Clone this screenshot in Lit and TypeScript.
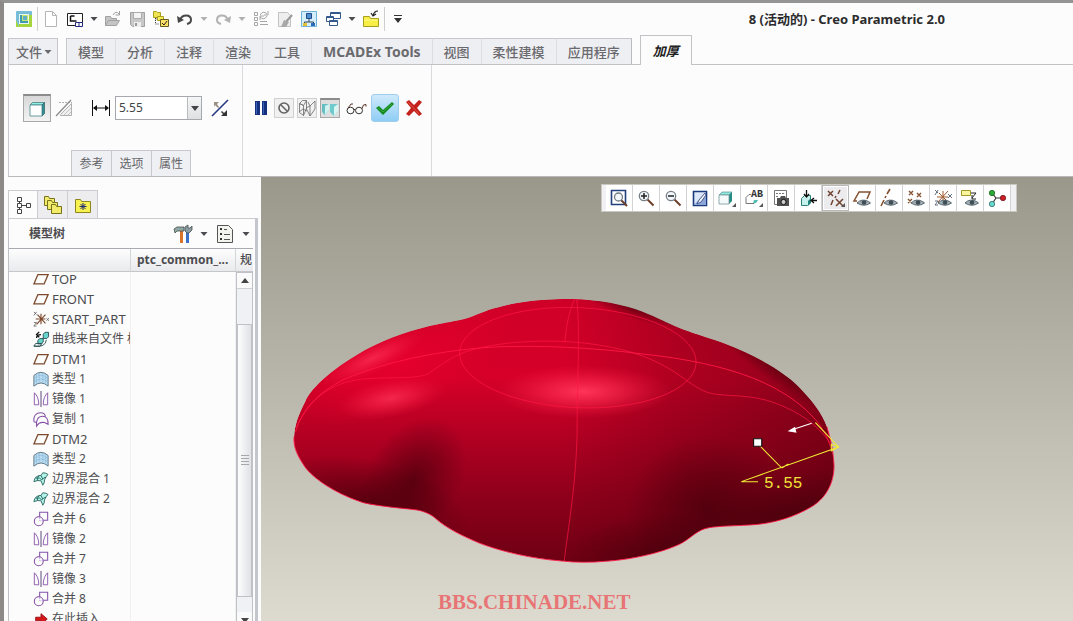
import { LitElement, html, svg, css, nothing, TemplateResult } from "lit";
import { customElement, property } from "lit/decorators.js";

const eye = svg`<path d="M4 14 Q9 9 15.500 12.500 L17.500 14 Q11 18.500 4 14Z" fill="#a3afb5" stroke="#58666e"/><circle cx="11" cy="13.500" r="2.300" fill="#3f4d55"/>`;
const corner = svg`<path d="M18 14v4h-4z" fill="#555"/>`;
const lens = svg`<path d="M10.500 10.500l6 6" stroke="#6b3f2a" stroke-width="2"/><circle cx="7" cy="7" r="4.700" fill="#f1f6fa" stroke="#777f86" stroke-width="1.300"/>`;
const folder = (x: number, y: number) => svg`<path d="M${x} ${y}h4l1 2h5v7h-10z" fill="#f3ec6a" stroke="#77721c"/>`;

const icons: Record<string, TemplateResult> = {
  app: svg`<rect x="1" y="1" width="16" height="16" rx="1" fill="#78bdd8"/><path d="M1 17V10L4 17zM4 14h13v3H4zM14 5h3v12h-3z" fill="#a5d63c"/><path d="M4 4h10v10H4z" fill="#e9f5f8"/><path d="M5 5h8v8H5z" fill="#3e9cae"/><path d="M7 5h6v6H7z" fill="#c8e86d"/><path d="M8 6h4v4H8z" fill="#5fb0c8"/>`,
  blank: svg`<path d="M3.500 1.500h7l4 4v11h-11zM10.500 1.500v4h4" fill="#fff" stroke="#b5b5b5"/>`,
  window: svg`<path d="M1.500 3.500h15v12h-15z" fill="#fff" stroke="#222"/><path d="M4.500 6v5h6M4.500 6h4" fill="none" stroke="#111" stroke-width="1.500"/><path d="M9.500 12.500h7v4h-7zM13 12v4" fill="#fff" stroke="#222b82"/>`,
  open: svg`<path d="M1.500 15.500v-9h5l1 2h5v2M1.500 15.500l3-5h11l-3 5z" fill="#c5c5c5" stroke="#a1a1a1"/><path d="M9 5q3-5 6-1M15.500 1v4h-4" fill="none" stroke="#a1a1a1"/>`,
  save: svg`<path d="M2.500 2.500h14v14h-12l-2-2z" fill="#c8c8c8" stroke="#a1a1a1"/><path d="M5.500 2.500h8v6h-8z" fill="#f4f4f4" stroke="#ababab"/><path d="M6 12h7v5H6z" fill="#eee"/><path d="M7 13h2v3H7z" fill="#999"/>`,
  modeltree: svg`<path d="M1.500 1.500h3l1 1h3v5h-7z" fill="#efe353" stroke="#aaa020"/><path d="M3.500 8v6h4M3.500 9h4" fill="none" stroke="#333" stroke-dasharray="1 1"/><path d="M5.500 6.500h6v4h-6z" fill="#f5ec56" stroke="#aaa020"/><path d="M8.500 9.500h8v7h-8z" fill="#fde166" stroke="#665d22"/><path d="M10 13l2 2 3-4" fill="none" stroke="#222"/>`,
  undo: svg`<path d="M4 10C6 4 15 4 15 10q0 3-4 4" fill="none" stroke="#484848" stroke-width="2"/><path d="M1 6l1 7 6-3z" fill="#484848"/>`,
  redo: svg`<path d="M14 10C12 4 3 4 3 10q0 3 4 4" fill="none" stroke="#b2b2b2" stroke-width="2"/><path d="M17 6l-1 7-6-3z" fill="#b2b2b2"/>`,
  regen: svg`<path d="M2.500 2.500h3v3h-3zM2.500 7.500h3v3h-3zM2.500 12.500h3v3h-3zM8 11.500h7M8 14.500h8" fill="none" stroke="#a6a6a6"/><path d="M8 5q3-5 7-1M16 1v4h-4M15 6q-3 5-7 1M8 10V6h4" fill="none" stroke="#a6a6a6"/>`,
  erase: svg`<path d="M2.500 2.500h9l3 3v11h-12z" fill="#eee" stroke="#c2c2c2"/><path d="M16 5l-7 8" stroke="#999" stroke-width="2"/><path d="M8 10l5 2-3 5H5z" fill="#a8a8a8"/>`,
  scene: svg`<path d="M1.500 1.500h15v15h-15z" fill="#d4effb" stroke="#6fb3da"/><path d="M6.500 3.500h5v5h-5z" fill="#4d8fc8" stroke="#234a8a"/><path d="M9 9v3M4.500 14v-2h9v2" fill="none" stroke="#345"/><path d="M3 13h4v3H3z" fill="#e4be34"/><path d="M11 13h4v3h-4z" fill="#2b6dbb"/>`,
  windows: svg`<path d="M6.500 2.500h10v6h-10z" fill="#fff" stroke="#34598c"/><path d="M7 3.500h9" stroke="#34598c"/><path d="M2.500 6.500h7v5h-7z" fill="#fff" stroke="#34598c"/><path d="M3 7.500h6" stroke="#34598c"/><path d="M5.500 10.500h8v5h-8z" fill="#fff" stroke="#34598c"/><path d="M6 11.500h7" stroke="#34598c"/>`,
  close: svg`<path d="M1.500 6.500h6l1 2h8v8h-15z" fill="#f7ef45" stroke="#a89e1e"/><path d="M2 10h14" stroke="#fff98e"/><path d="M16 1q-4 0-5 5M9 3l2 3 3-2" fill="none" stroke="#222" stroke-width="1.200"/>`,
  solid: svg`<path d="M2 5l2.500-2.500h12L14 5z" fill="#8df0e4" stroke="#3d6f77" stroke-width=".7"/><path d="M16.500 2.500v11L14 16V5z" fill="#2e8f94" stroke="#2d5f66" stroke-width=".7"/><path d="M2 5h12v11H2z" fill="#fdfefe" stroke="#46888c" stroke-width=".8"/>`,
  hatch: svg`<path d="M3 3.500h13" stroke="#b0b0b0" stroke-dasharray="2 1"/><path d="M4.500 15.500L15.500 4.500v12h-11z" fill="#f0f0f0" stroke="#b0b0b0"/><path d="M8 16l7-7M12 16l3-3" stroke="#c4c4c4"/><path d="M0 17L15 1" stroke="#8b8b8b" stroke-width="1.200"/>`,
  dim: svg`<path d="M.5 1v16M17.500 1v16" stroke="#111"/><path d="M2 9h14" stroke="#111"/><path d="M1 9l4-3v6zM17 9l-4-3v6z" fill="#111"/>`,
  flip: svg`<path d="M1 17L17 1" stroke="#24367f" stroke-width="1.600"/><path d="M3 3h5L6 5l2 3-1 1-3-3-1 2z" fill="#9a8f85"/><path d="M16 11v6h-6l2-2-2-2 1-1 2 2z" fill="#333"/>`,
  pause: svg`<path d="M3 2h5v14H3zM10 2h5v14h-5z" fill="#16317e"/><path d="M4 3h1v12H4zM11 3h1v12h-1z" fill="#3c62ba"/>`,
  none: svg`<circle cx="9" cy="9" r="5" fill="none" stroke="#636363" stroke-width="1.600"/><path d="M5.500 5.500l7 7" stroke="#636363" stroke-width="1.600"/>`,
  wire: svg`<path d="M1.500 4.500l3-3h4l-3 5zM1.500 4.500v9l4 3v-10zM8.500 1.500v8l-3 7M8 9l4 8V7zM12 7l5-5v8l-5 7M10 3l2 4M1 13l4-3 4 2" fill="none" stroke="#6a6a6a" stroke-width=".8"/>`,
  shaded: svg`<path d="M1 4h7v6l-4 5-3-3z" fill="#65bfc2"/><path d="M4 6l4-2v6l-4 5z" fill="#cef3f0"/><path d="M9 4h8v7l-4 5-4-4z" fill="#6fcacb"/><path d="M13 7l4-3v7l-4 5z" fill="#d9f6f3"/>`,
  glasses: svg`<ellipse cx="3.500" cy="11.500" rx="3.500" ry="3.300" fill="none" stroke="#333"/><ellipse cx="12" cy="11.500" rx="3.500" ry="3.300" fill="none" stroke="#333"/><path d="M7 10.500h1.500M1 9l3-4h2M15 9.500q1-5 4-4v2" fill="none" stroke="#5d3326"/>`,
  check: svg`<path d="M0 9l3-2 4 4 9-8 2 2L7 16z" fill="#128a1e"/><path d="M2 9l5 4 9-8" stroke="#37aa3f" fill="none"/>`,
  cross: svg`<path d="M1 3l3-2 5 5 5-5 3 2-5 6 5 6-3 2-5-5-5 5-3-2 5-6z" fill="#c3221c"/><path d="M3 3l11 12" stroke="#dd5547"/>`,
  tree: svg`<path d="M3.500 1.500h4v4h-4zM3.500 7.500h4v4h-4zM3.500 13.500h4v4h-4zM12.500 7.500h4v4h-4zM5.500 5.500v2M5.500 11.500v2M7.500 9.500h5" fill="none" stroke="#444"/>`,
  folders: svg`${folder(0.5, 0.5)}${folder(3.5, 4.5)}${folder(7.5, 8.5)}`,
  favorite: svg`<path d="M1.500 3.500h5l1 2h9v11h-15z" fill="#f8f250" stroke="#8d8620"/><path d="M9 7v7M5.500 10.500h7M6.500 8l5 5M11.500 8l-5 5" stroke="#222a70"/>`,
  tools: svg`<path d="M6 6h3v12H6z" fill="#d9742c"/><path d="M0 4l3-2h7v4H3L1 8z" fill="#90a7a4" stroke="#44504e" stroke-width=".8"/><path d="M12 7h3v11h-3z" fill="#3b70c8"/><path d="M11 2v4l2 2h2l3-3V1l-2 2h-2V0z" fill="#8c9da2" stroke="#44504e" stroke-width=".8"/>`,
  list: svg`<path d="M1.500 .5h11l4 4v13h-15z" fill="#f4f4ee" stroke="#555"/><path d="M4 3h2v2H4zM4 8h2v2H4zM4 13h2v2H4z" fill="#333"/><path d="M8 4.500h3M8 9.500h6M8 14.500h6" stroke="#555"/>`,
  plane: svg`<path d="M1 14.500L5.500 4h11.500l-4.500 10.500z" fill="none" stroke="#7d4a2e" stroke-width="1.500"/>`,
  csys: svg`<path d="M3 9h11M9 3v12M5 4l9 10M14 4L4 15" stroke="#7d4a2e" stroke-width="1.300"/><path d="M1 1l3 3M4 1L1 5M15 8l3 3M18 8l-3 3M1 13h3l-3 4h3" fill="none" stroke="#6a6a6a"/>`,
  curvefile: svg`<path d="M4 8q0-4 5-4M7 1L4 4l3 3" fill="none" stroke="#111" stroke-width="1.500"/><path d="M11.500 3.500l2-2h4v5l-2 2h-4zM5.500 10.500l2-2h4v4l-2 2h-4z" fill="#67d5ca" stroke="#244c50"/><path d="M1 17l2-3h7l-2 3zq13 2 14-7" fill="none" stroke="#244c50"/>`,
  style: svg`<path d="M1 5q8-7 16 0v12q-8-7-16 0z" fill="#b8dcf2" stroke="#566e7a"/><path d="M4 5v9M7 3v9M11 3v9M14 4v10M2 8q7-6 14 0M2 12q7-6 14 0" fill="none" stroke="#7ba9cc" stroke-dasharray="1 1"/>`,
  mirror: svg`<path d="M9 0v18" stroke="#493268"/><path d="M1.500 2v13.500h5q0-9-5-13.500M16.500 2v13.500h-5q0-9 5-13.500" fill="none" stroke="#8551a8"/>`,
  copy: svg`<path d="M1 12q-1-10 8-10 4 0 5 4M1 12l3 1M4 17q-1-11 7-11 6 0 6 9l-4-2q-6-1-9 4z" fill="none" stroke="#8551a8" stroke-width="1.200"/>`,
  blend: svg`<path d="M1 12q1-7 8-7l2-3q4 0 6 2-3 2-4 6 0 4-2 6l-2-5q-4-1-8 1z" fill="#b4f3ea" stroke="#24645d"/><path d="M3 8q5-1 7 2 2-3 5-3M7 5q-3 3-2 6M9 5l2 4" fill="none" stroke="#24645d"/>`,
  merge: svg`<path d="M7.500 7V1.500h9v9h-5" fill="none" stroke="#8551a8" stroke-width="1.200"/><circle cx="6.500" cy="11.500" r="5" fill="none" stroke="#8551a8" stroke-width="1.200"/><path d="M7.500 8v3h4" fill="none" stroke="#b394c9" stroke-dasharray="1 1"/>`,
  insert: svg`<path d="M3 7h6V3l7 6-7 6v-4H3z" fill="#d5171b" stroke="#95090d"/>`,
  refit: svg`<path d="M1.500 1.500h14v14h-14z" fill="#fff" stroke="#233f7c" stroke-width="1.600"/><path d="M11 11l6 6" stroke="#6b3f2a" stroke-width="2"/><circle cx="8.500" cy="8" r="4" fill="#f4f8fa" stroke="#737d83" stroke-width="1.300"/>`,
  zoomin: svg`${lens}<path d="M4 7h6M7 4v6" stroke="#222" stroke-width="1.500"/>`,
  zoomout: svg`${lens}<path d="M4 7h6" stroke="#222" stroke-width="1.500"/>`,
  repaint: svg`<path d="M2.500 2.500h13v14h-13z" fill="#dce8f8" stroke="#1c3a7e" stroke-width="1.600"/><path d="M3 16L15 3v13z" fill="#8ba5d8"/><path d="M14 4l-6 7-2 4 4-2 5-7z" fill="#f4f6ff" stroke="#293e77" stroke-width=".8"/>`,
  display: svg`<path d="M1 6l3-3h10l-3 3z" fill="#8fe6dc" stroke="#5f9496" stroke-width=".7"/><path d="M14 3v9l-3 3V6z" fill="#258a83"/><path d="M1 6h10v9H1z" fill="#f4faf9" stroke="#73989b" stroke-width=".8"/>${corner}`,
  views: svg`<path d="M6 5.500H4l-3 3v6h8l3-3" fill="none" stroke="#777"/><path d="M9 11h4l-2 3H8z" fill="#52bdb4"/><text x="6" y="8" font-size="10" font-weight="700" font-family="Liberation Mono, monospace" fill="#333">AB</text>${corner}`,
  camera: svg`<path d="M2.500 1.500h12v14h-12z" fill="#fff" stroke="#777"/><path d="M4 4.500h8M4 7.500h3" stroke="#777" stroke-dasharray="2 1"/><path d="M5 9h3l1-2h4l1 2h3v8H5z" fill="#505050"/><circle cx="11.500" cy="13" r="2.600" fill="#ccc" stroke="#111"/>`,
  section: svg`<path d="M2.500 9.500l3-3h6v7l-3 3h-6z" fill="#c6f0eb" stroke="#2b7d77"/><path d="M12 9v5l-3 3v-5z" fill="#207f78"/><path d="M7.500 1v7M5 5l2.500 3L10 5M18 11.500h-5M15 9l-3 2.500 3 2.500" fill="none" stroke="#111" stroke-width="1.300"/>`,
  datum: svg`<path d="M1 2l5 5M6 2L1 7M9 10l7 7M16 10l-7 7M13 1l-2 4M9 7l-1 2M6 11l-2 5" stroke="#704331" stroke-width="1.500"/>${corner}`,
  planeeye: svg`<path d="M4 12H1L6 3h11l-3 7" fill="none" stroke="#84502f" stroke-width="1.500"/>${eye}`,
  axiseye: svg`<path d="M10 0L7 5M6 7l-1 2M4 11l-3 6" stroke="#84502f" stroke-width="1.600"/>${eye}`,
  pointeye: svg`<path d="M2 2l4 4M6 2L2 6M10 4l4 4M14 4l-4 4M1 10l4 4M5 10l-4 4" stroke="#84502f" stroke-width="1.400"/>${eye}`,
  csyseye: svg`<path d="M3 8h11M9 2v12M5 4l8 8M14 2L4 13" stroke="#9d582e"/><path d="M1 1l3 3M4 1L1 6M14 5l4 4M18 5l-4 4M1 12h3l-3 4h3" fill="none" stroke="#667080"/>${eye}`,
  noteeye: svg`<path d="M.5 1.500h9v5h-9z" fill="#faf5a0" stroke="#a39725"/><path d="M10 4h5l-4 5M11 6v4h4" fill="none" stroke="#222"/>${eye}`,
  spin: svg`<path d="M4 4l4 5h7M8 9l-4 6" fill="none" stroke="#333" stroke-width="1.200"/><circle cx="4" cy="4" r="2.700" fill="#29ac34" stroke="#17561d" stroke-width=".7"/><circle cx="15" cy="9" r="2.700" fill="#c92028" stroke="#681015" stroke-width=".7"/><circle cx="4" cy="15" r="2.700" fill="#69d7cb" stroke="#22635d" stroke-width=".7"/>`,
  caret: svg`<path d="M5.500 7h7l-3.500 4z" fill="currentColor"/>`,
  more: svg`<path d="M5 5h8v1H5zM5 8h8l-4 5z" fill="#333"/>`,
  up: svg`<path d="M5 11l4-5 4 5z" fill="#444"/>`,
  down: svg`<path d="M5 7l4 5 4-5z" fill="#444"/>`,
};

@customElement("ui-icon")
class UiIcon extends LitElement {
  @property() name = "";
  static styles = css`
    :host { display: block; width: 18px; height: 18px; flex: none; }
    svg { display: block; width: 100%; height: 100%; overflow: visible; }
  `;
  render() {
    return html`<svg viewBox="0 0 18 18" fill="none" aria-hidden="true">${icons[this.name]}</svg>`;
  }
}

const silhouette =
  "M38 470C40 430 52 400 68 365C85 320 150 260 230 210C300 170 360 148 430 132C460 126 480 122 495 118C530 108 550 92 590 82C640 66 700 56 790 57C860 58 930 74 980 95C1020 112 1050 130 1075 142C1110 158 1150 170 1200 190C1290 228 1370 280 1410 330C1440 365 1465 400 1478 440C1486 470 1494 500 1497 550C1500 600 1480 650 1440 678C1390 712 1330 732 1270 735C1220 738 1190 738 1160 743C1130 748 1115 770 1085 790C1040 815 960 838 880 844C840 848 800 848 760 843C680 836 600 815 540 790C480 762 445 740 420 715C405 700 385 693 370 690C330 684 270 680 225 668C160 645 100 605 70 565C45 525 36 500 38 470Z";

@customElement("model-view")
class ModelView extends LitElement {
  static styles = css`
    :host { display: block; width: 100%; height: 100%; }
    .scene { display: block; width: 100%; height: 100%; }
    .edge { fill: none; stroke: #ff1744; stroke-width: 2.6; }
    .faint { opacity: .75; }
    .measure { font: 16px "Liberation Mono", monospace; fill: #f2e33a; }
    .site { font: bold 21px "Liberation Serif", serif; fill: #e87575; }
  `;
  render() {
    return html`
      <svg class="scene" viewBox="261 177 812 444" preserveAspectRatio="xMidYMid slice" role="img" aria-label="8">
        <defs>
          <linearGradient id="base" x1="0" y1="0" x2="0" y2="1">
            <stop offset="0" stop-color="#cf0028"/><stop offset=".3" stop-color="#d60029"/>
            <stop offset=".5" stop-color="#b60023"/><stop offset=".75" stop-color="#8e001b"/><stop offset="1" stop-color="#6e0013"/>
          </linearGradient>
          <linearGradient id="side" x1="0" y1="0" x2="1" y2="0">
            <stop offset=".5" stop-color="#50000c" stop-opacity="0"/><stop offset=".72" stop-color="#50000c" stop-opacity=".3"/>
            <stop offset="1" stop-color="#400009" stop-opacity=".5"/>
          </linearGradient>
          <radialGradient id="dark"><stop offset="0" stop-color="#45000a" stop-opacity=".7"/><stop offset=".5" stop-color="#45000a" stop-opacity=".35"/><stop offset="1" stop-color="#45000a" stop-opacity="0"/></radialGradient>
          <radialGradient id="glow"><stop offset="0" stop-color="#ff345a"/><stop offset=".45" stop-color="#ff2a50" stop-opacity=".55"/><stop offset="1" stop-color="#f01840" stop-opacity="0"/></radialGradient>
          <radialGradient id="red"><stop offset="0" stop-color="#e8002d" stop-opacity=".9"/><stop offset="1" stop-color="#e0002a" stop-opacity="0"/></radialGradient>
          <clipPath id="body"><path d=${silhouette}/></clipPath>
        </defs>
        <g transform="translate(280 280) scale(.37 .3333)">
          <g clip-path="url(#body)">
            <path d=${silhouette} fill="url(#base)"/>
            <path d=${silhouette} fill="url(#side)"/>
            <ellipse cx="330" cy="250" rx="330" ry="140" transform="rotate(-25 330 250)" fill="url(#red)"/>
            <ellipse cx="360" cy="600" rx="130" ry="200" transform="rotate(25 360 600)" fill="url(#dark)"/>
            <ellipse cx="240" cy="670" rx="280" ry="130" transform="rotate(15 240 670)" fill="url(#dark)"/>
            <ellipse cx="1160" cy="690" rx="220" ry="220" fill="url(#dark)"/>
            <ellipse cx="1040" cy="830" rx="260" ry="130" fill="url(#dark)"/>
            <ellipse cx="1380" cy="700" rx="260" ry="110" transform="rotate(-20 1380 700)" fill="url(#dark)"/>
            <ellipse cx="1370" cy="275" rx="300" ry="50" transform="rotate(38 1370 275)" fill="url(#dark)"/>
            <ellipse cx="960" cy="82" rx="170" ry="36" transform="rotate(20 960 82)" fill="url(#dark)"/>
            <ellipse cx="820" cy="335" rx="240" ry="80" fill="url(#glow)"/>
            <ellipse cx="300" cy="355" rx="150" ry="58" transform="rotate(-12 300 355)" fill="url(#glow)" opacity=".75"/>
            <ellipse cx="250" cy="235" rx="160" ry="44" transform="rotate(-28 250 235)" fill="url(#glow)" opacity=".7"/>
          </g>
          <path class="edge" d="M38 470C36 500 45 525 70 565C100 605 160 645 225 668C270 680 330 684 370 690C385 693 405 700 420 715C445 740 480 762 540 790C600 815 680 836 760 843C800 848 840 848 880 844C960 838 1040 815 1085 790C1115 770 1130 748 1160 743C1190 738 1220 738 1270 735C1330 732 1390 712 1440 678C1480 650 1500 600 1497 550C1494 500 1486 470 1478 440"/>
          <ellipse class="edge faint" cx="805" cy="233" rx="320" ry="150" transform="rotate(3 805 233)"/>
          <path class="edge faint" d="M802 57C812 160 802 330 803 460C800 600 785 700 768 843"/>
          <path class="edge faint" d="M796 57Q775 110 770 185"/>
          <path class="edge" d="M42 455C60 390 100 340 170 300C250 260 400 212 580 201C700 195 850 203 980 222C1100 236 1200 260 1280 295C1370 335 1430 390 1462 440Q1480 470 1488 500"/>
          <path class="edge faint" d="M45 440C90 330 170 298 250 295C330 292 370 295 400 282C440 250 470 225 520 209C600 185 720 176 830 190C920 203 990 225 1050 265C1090 290 1120 325 1160 339C1210 352 1270 340 1340 370C1400 395 1450 430 1488 490"/>
          <path d="M1437 430L1380 451" stroke="#fff" stroke-width="3"/><path d="M1372 454l20-14 4 18z" fill="#fff"/>
          <g stroke="#f4ed35" fill="none" stroke-width="3"><path d="M1295 495L1356 564M1292 605H1247L1510 501M1447 428L1510 501M1356 564l18-12M1510 501l-20-8v20z"/></g>
          <path d="M1280 476h22v23h-22z" fill="#fff" stroke="#111" stroke-width="3"/>
        </g>
        <text class="measure" x="764" y="488">5.55</text>
        <text class="site" x="438" y="609">BBS.CHINADE.NET</text>
      </svg>`;
  }
}

interface Tool { icon: string; label: string }

@customElement("app-root")
class AppRoot extends LitElement {
  static styles = css`
    :host {
      display: flex; flex-direction: column; box-sizing: border-box; height: 100vh; overflow: hidden;
      border-left: 4px solid #8d8989; border-top: 3px solid #949494; background: #fcfcfc; color: #4c4c50;
      font: 12px/20px "Noto Sans", "Noto Sans CJK SC", sans-serif;
    }
    * { box-sizing: border-box; }
    button { display: flex; align-items: center; justify-content: center; flex: none; margin: 0; padding: 0; border: 0; background: none; color: inherit; font: inherit; }

    .titlebar { display: flex; align-items: center; height: 32px; padding-left: 8px; flex: none; }
    .quick { display: flex; align-items: center; }
    .quick .tool { width: 24px; height: 24px; }
    .quick .caret { width: 14px; height: 24px; overflow: hidden; }
    .dim { color: #b0b0b0; }
    .rule { width: 1px; height: 24px; margin: 0 1px; background: #cfcfcf; }
    .caption { flex: 1; margin: 0; padding-right: 128px; text-align: right; font-size: 13px; font-weight: 700; color: #2c2c2e; }

    .tabs { display: flex; align-items: flex-end; height: 30px; margin-left: 4px; flex: none; border-bottom: 1px solid #c2c2c7; }
    .tab { height: 26px; padding: 0 11px; border-top: 1px solid #c6c7ca; border-right: 1px solid #dcdde0; background: #eeeff2; color: #6a6a6e; font-size: 13px; font-weight: 500; }
    .tab.latin { font-size: 14px; font-weight: 700; }
    .tab.file { padding: 0 0 0 7px; margin-right: 8px; border: 1px solid #c6c7ca; border-bottom: 0; }
    .tab.file ui-icon { margin-left: -3px; }
    .tab.first { border-left: 1px solid #c6c7ca; }
    .tab.last { border-right-color: #b9bbc0; margin-right: 8px; }
    .tab.active { height: 30px; margin-bottom: -1px; padding: 0 12px; border: 1px solid #c2c2c7; border-bottom: 0; background: #fcfcfc; color: #222; font-style: italic; font-weight: 700; }

    .ribbon { display: flex; height: 112px; margin-left: 4px; flex: none; border-left: 1px solid #c8c8ce; border-bottom: 1px solid #b9b9bd; }
    .group { display: flex; flex-direction: column; justify-content: space-between; border-right: 1px solid #d9dadd; padding-top: 29px; }
    .row { display: flex; align-items: center; height: 28px; }
    .row.shape { padding: 0 12px 0 14px; gap: 4px; }
    .row.actions { padding: 0 7px 0 8px; gap: 3px; }
    .row .tool { width: 20px; height: 20px; }
    .row .tool.boxed { border: 1px solid #d0d0d0; background: #f1f1f1; }
    .row .tool.sunk { border: 1px solid #a8a8a8; border-top: 2px solid #8b8b8b; background: #dedede; }
    .row .tool.big { width: 28px; height: 28px; }
    .row .tool.sunk.big { background: linear-gradient(#d8d8d8, #f3f3f3); }
    .row .tool.check { margin: 0 2px 0 2px; }
    .row .tool.verify { margin-left: 3px; }
    .row .tool.ok { border: 1px solid #9fcdec; border-radius: 3px; background: linear-gradient(#cfe9fb, #8fcdf5); }
    .combo { display: flex; width: 87px; height: 24px; border: 1px solid #a5a8ac; background: #fff; }
    .combo input { flex: 1; min-width: 0; border: 0; padding: 0 3px; background: none; color: #444; font: inherit; outline: 0; }
    .combo button { width: 14px; border-left: 1px solid #b9bbbe; background: linear-gradient(#f6f6f6, #dfe0e2); overflow: hidden; }
    .row.shape .dimension { display: flex; margin: 0 1px 0 13px; }
    .row.shape .flip { margin-left: 4px; }
    .panels { display: flex; padding-left: 62px; }
    .panels button { width: 40px; height: 26px; border: 1px solid #c7c8cc; border-bottom: 0; border-right-width: 0; background: #eff0f3; color: #66666a; }
    .panels button:last-child { border-right-width: 1px; }

    .main { display: flex; flex: 1; min-height: 0; }
    .side { display: flex; flex-direction: column; width: 257px; flex: none; padding: 13px 3px 0 4px; }
    .sidetabs { display: flex; flex: none; }
    .sidetabs button { width: 30px; height: 29px; border: 1px solid #cbccd0; border-left: 0; background: #ededf0; }
    .sidetabs button.on { border-left: 1px solid #cbccd0; border-bottom-color: #fcfcfc; background: #fcfcfc; }
    .tree { display: flex; flex-direction: column; flex: 1; min-height: 0; border-left: 1px solid #bfc0c5; border-right: 3px solid #c3c6cd; border-top: 1px solid #cbccd0; margin-top: -1px; }
    .treehead { display: flex; align-items: center; height: 29px; padding-left: 20px; flex: none; }
    .treehead h2 { flex: 1; margin: 0; font-size: 12px; }
    .treehead .tool { width: 24px; height: 24px; }
    .treehead .caret { width: 18px; height: 24px; }
    .grid { position: relative; flex: 1; min-height: 0; margin-right: 2px; overflow: hidden; border-top: 1px solid #a9abb0; }
    table { width: 100%; table-layout: fixed; border-collapse: separate; border-spacing: 0; }
    .name { width: 122px; }
    .scrollcol { width: 17px; }
    th { height: 23px; padding: 0 0 0 6px; border-bottom: 1px solid #c5c6ca; border-right: 1px solid #d5d6d9; background: linear-gradient(#fdfdfd, #e9eaed); text-align: left; white-space: nowrap; }
    th:last-child { border-right: 0; padding-left: 4px; font-weight: 500; }
    td { height: 20px; padding: 0; border-right: 1px solid #f0f0f2; }
    .item { display: flex; align-items: center; gap: 3px; height: 20px; padding-left: 24px; white-space: nowrap; overflow: hidden; }
    .item ui-icon { width: 16px; height: 16px; }
    .item.latin { font-size: 13px; }
    .cut td { height: 17px; }
    .cut .item { margin-top: -3px; }
    .scroll { position: absolute; top: 23px; right: 0; bottom: -8px; width: 17px; display: flex; flex-direction: column; border: 1px solid #bfc1c6; background: #f0f1f4; }
    .scroll button { height: 16px; border-bottom: 1px solid #cfd0d4; background: #fafafa; }
    .lead { flex: 35; }
    .thumb { display: flex; align-items: center; justify-content: center; flex: 274; border: 1px solid #bfc1c6; background: linear-gradient(90deg, #fdfdfd, #dfe1e6); }
    .grip { width: 8px; height: 11px; background: repeating-linear-gradient(#a5a7ab 0 1px, transparent 1px 3px); }
    .tail { flex: 15; }
    .canvas { position: relative; flex: 1; min-width: 0; background: linear-gradient(#9a988b, #bbb9ad 50%, #dddbd0); }
    .viewbar { position: absolute; top: 7px; right: 56px; display: flex; height: 28px; padding: 0 5px 0 4px; border: 1px solid #c9c8c2; background: #f1f1f3; }
    .viewbar button { width: 27px; border-right: 1px solid #d3d3d6; background: #fff; }
    .viewbar button.on { border: 1px solid #b9b9b9; background: #ececee; box-shadow: inset 0 0 0 1px #fff; }
  `;

  private quick: (Tool | "caret" | "dimcaret")[] = [
    { icon: "blank", label: "新建" }, { icon: "window", label: "窗口" }, "caret",
    { icon: "open", label: "打开" }, { icon: "save", label: "保存" }, { icon: "modeltree", label: "模型" },
    { icon: "undo", label: "撤消" }, "dimcaret", { icon: "redo", label: "重做" }, "dimcaret",
    { icon: "regen", label: "重新生成" }, { icon: "erase", label: "拭除" }, { icon: "scene", label: "场景" },
    { icon: "windows", label: "窗口" }, "caret", { icon: "close", label: "关闭" },
  ];
  private tabs = ["模型", "分析", "注释", "渲染", "工具", "MCADEx Tools", "视图", "柔性建模", "应用程序"];
  private views = ["refit", "zoomin", "zoomout", "repaint", "display", "views", "camera", "section", "datum", "planeeye", "axiseye", "pointeye", "csyseye", "noteeye", "spin"];
  private items: [string, string][] = [
    ["plane", "TOP"], ["plane", "FRONT"], ["csys", "START_PART"], ["curvefile", "曲线来自文件 标识"],
    ["plane", "DTM1"], ["style", "类型 1"], ["mirror", "镜像 1"], ["copy", "复制 1"], ["plane", "DTM2"],
    ["style", "类型 2"], ["blend", "边界混合 1"], ["blend", "边界混合 2"], ["merge", "合并 6"],
    ["mirror", "镜像 2"], ["merge", "合并 7"], ["mirror", "镜像 3"], ["merge", "合并 8"], ["insert", "在此插入"],
  ];

  private tool(icon: string, label: string, cls = "") {
    return html`<button class="tool ${cls}" aria-label=${label}><ui-icon name=${icon}></ui-icon></button>`;
  }
  private caret(cls = "") {
    return html`<button class="caret ${cls}" aria-label="更多"><ui-icon name="caret"></ui-icon></button>`;
  }
  private script(text: string) {
    return /^[A-Z]/.test(text) ? "latin" : "";
  }

  render() {
    const last = this.tabs.length - 1;
    return html`
      <header class="titlebar">
        <div class="quick">
          ${this.tool("app", "Creo")}<span class="rule"></span>
          ${this.quick.map((q) => typeof q === "string" ? this.caret(q === "dimcaret" ? "dim" : "") : this.tool(q.icon, q.label))}
          <span class="rule"></span>${this.tool("more", "自定义")}
        </div>
        <h1 class="caption">8 (活动的) - Creo Parametric 2.0</h1>
      </header>
      <nav class="tabs">
        <button class="tab file">文件<ui-icon name="caret"></ui-icon></button>
        ${this.tabs.map((t, i) => html`<button class="tab ${i === 0 ? "first" : i === last ? "last" : ""} ${this.script(t)}">${t}</button>`)}
        <button class="tab active">加厚</button>
      </nav>
      <section class="ribbon">
        <div class="group">
          <div class="row shape">
            ${this.tool("solid", "实体", "sunk big")}${this.tool("hatch", "移除材料")}
            <label class="dimension" for="thickness" aria-label="厚度"><ui-icon name="dim"></ui-icon></label>
            <div class="combo"><input id="thickness" value="5.55"><button aria-label="最近值"><ui-icon name="down"></ui-icon></button></div>
            ${this.tool("flip", "反向", "flip")}
          </div>
          <div class="panels"><button>参考</button><button>选项</button><button>属性</button></div>
        </div>
        <div class="group">
          <div class="row actions">
            ${this.tool("pause", "暂停")}
            ${this.tool("none", "无预览", "boxed")}${this.tool("wire", "分离", "boxed")}${this.tool("shaded", "连接", "sunk")}
            ${this.tool("glasses", "校验", "verify")}${this.tool("check", "确定", "big ok check")}${this.tool("cross", "取消")}
          </div>
        </div>
      </section>
      <div class="main">
        <aside class="side">
          <div class="sidetabs">
            <button class="on" aria-label="模型树"><ui-icon name="tree"></ui-icon></button>
            <button aria-label="文件夹"><ui-icon name="folders"></ui-icon></button>
            <button aria-label="收藏夹"><ui-icon name="favorite"></ui-icon></button>
          </div>
          <div class="tree">
            <div class="treehead"><h2>模型树</h2>${this.tool("tools", "设置")}${this.caret()}${this.tool("list", "显示")}${this.caret()}</div>
            <div class="grid">
              <table>
                <thead><tr><th class="name" aria-label="名称"></th><th>ptc_common_...</th><th class="scrollcol">规</th></tr></thead>
                <tbody>${this.items.map(([icon, text], i) => html`<tr class=${i === 0 ? "cut" : nothing}><td><div class="item ${this.script(text)}"><ui-icon name=${icon}></ui-icon>${text}</div></td><td></td><td></td></tr>`)}</tbody>
              </table>
              <div class="scroll">
                <button aria-label="向上"><ui-icon name="up"></ui-icon></button>
                <div class="lead"></div><div class="thumb"><div class="grip"></div></div><div class="tail"></div>
                <button aria-label="向下"><ui-icon name="down"></ui-icon></button>
              </div>
            </div>
          </div>
        </aside>
        <main class="canvas">
          <model-view></model-view>
          <div class="viewbar">${this.views.map((v) => html`<button class=${v === "datum" ? "on" : nothing} aria-label=${v}><ui-icon name=${v}></ui-icon></button>`)}</div>
        </main>
      </div>`;
  }
}
